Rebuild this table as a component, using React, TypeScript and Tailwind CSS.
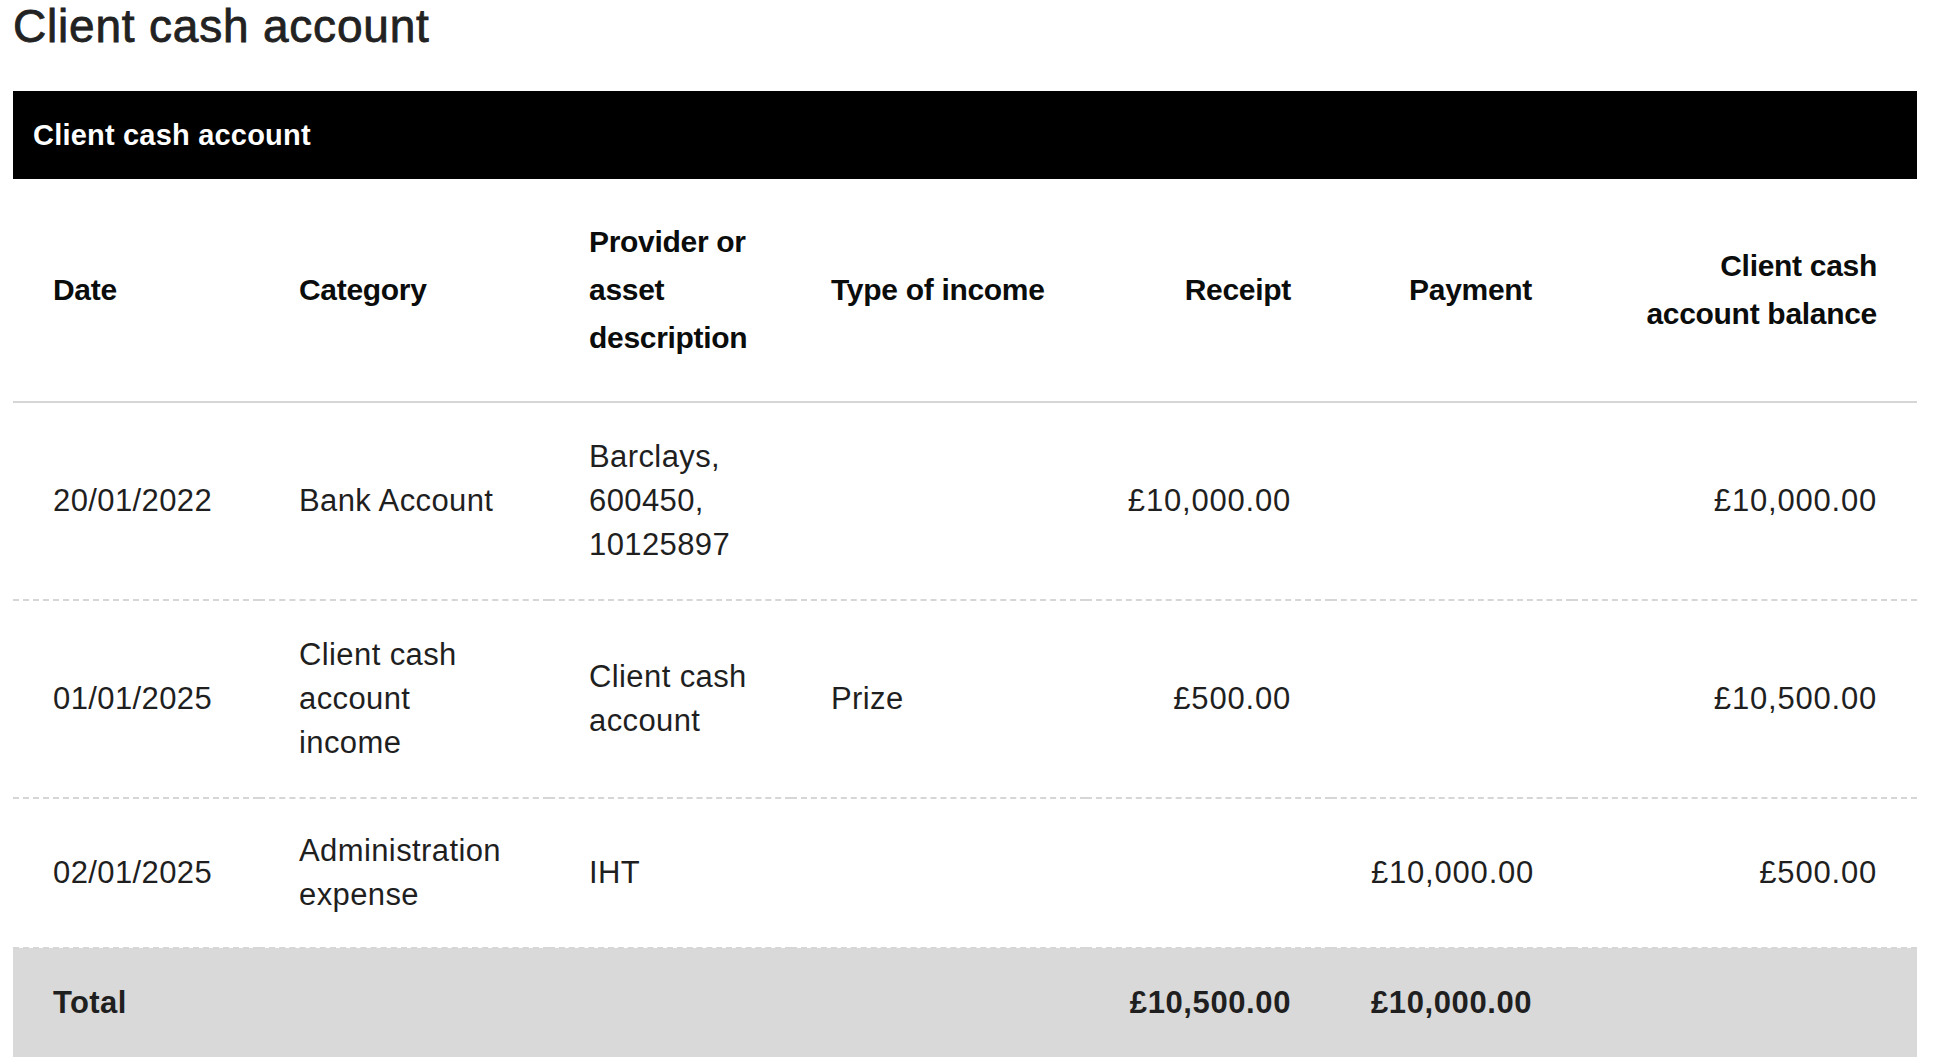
import React from 'react';

type Row = {
  date: string;
  category: string[];
  provider: string[];
  income: string;
  receipt: string;
  payment: string;
  balance: string;
};

const rows: Row[] = [
  {
    date: '20/01/2022',
    category: ['Bank Account'],
    provider: ['Barclays,', '600450,', '10125897'],
    income: '',
    receipt: '£10,000.00',
    payment: '',
    balance: '£10,000.00',
  },
  {
    date: '01/01/2025',
    category: ['Client cash', 'account', 'income'],
    provider: ['Client cash', 'account'],
    income: 'Prize',
    receipt: '£500.00',
    payment: '',
    balance: '£10,500.00',
  },
  {
    date: '02/01/2025',
    category: ['Administration', 'expense'],
    provider: ['IHT'],
    income: '',
    receipt: '',
    payment: '£10,000.00',
    balance: '£500.00',
  },
];

const Lines: React.FC<{ lines: string[] }> = ({ lines }) => (
  <>
    {lines.map((l, i) => (
      <React.Fragment key={i}>
        {i > 0 && <br />}
        {l}
      </React.Fragment>
    ))}
  </>
);

const App: React.FC = () => {
  const th = 'px-[40px] py-[39px] align-middle text-[30px] leading-[48px] font-bold tracking-[-0.3px] text-[#0b0c0c] whitespace-nowrap';
  const td = 'px-[40px] align-middle text-[31px] leading-[44px] tracking-[0.4px] text-[#1f1f1f] whitespace-nowrap';
  const money = 'tracking-[0.8px]';

  return (
    <div className="min-h-screen bg-white pl-[13px] font-['Liberation_Sans',Arial,sans-serif]">
      <h1 className="pt-0 text-[46px] leading-[52px] tracking-[0.8px] font-normal text-[#222222] [-webkit-text-stroke:0.8px_#222222]">
        Client cash account
      </h1>

      <table className="mt-[39px] w-[1904px] table-fixed border-collapse">
        <caption className="bg-black pl-[20px] text-left text-[29px] leading-[88px] font-bold tracking-[0.2px] text-white">
          Client cash account
        </caption>
        <colgroup>
          <col className="w-[246px]" />
          <col className="w-[290px]" />
          <col className="w-[242px]" />
          <col className="w-[295px]" />
          <col className="w-[245px]" />
          <col className="w-[241px]" />
          <col className="w-[345px]" />
        </colgroup>
        <thead>
          <tr className="border-b-2 border-solid border-[#d6d6d6]">
            <th className={`${th} text-left`}>Date</th>
            <th className={`${th} text-left`}>Category</th>
            <th className={`${th} text-left`}>
              Provider or
              <br />
              asset
              <br />
              description
            </th>
            <th className={`${th} text-left`}>Type of income</th>
            <th className={`${th} text-right`}>Receipt</th>
            <th className={`${th} text-right`}>Payment</th>
            <th className={`${th} text-right`}>
              Client cash
              <br />
              account balance
            </th>
          </tr>
        </thead>
        <tbody>
          {rows.map((r, i) => {
            // last row sits a little tighter in the design
            const pad = i === rows.length - 1 ? 'py-[30px]' : 'py-[32px]';
            return (
              <tr key={i} className="border-b-2 border-dashed border-[#d6d6d6]">
                <td className={`${td} ${pad} text-left`}>{r.date}</td>
                <td className={`${td} ${pad} text-left`}>
                  <Lines lines={r.category} />
                </td>
                <td className={`${td} ${pad} text-left`}>
                  <Lines lines={r.provider} />
                </td>
                <td className={`${td} ${pad} text-left`}>{r.income}</td>
                <td className={`${td} ${pad} ${money} text-right`}>{r.receipt}</td>
                <td className={`${td} ${pad} ${money} text-right`}>{r.payment}</td>
                <td className={`${td} ${pad} ${money} text-right`}>{r.balance}</td>
              </tr>
            );
          })}
        </tbody>
        <tfoot>
          <tr className="bg-[#d9d9d9]">
            <td className={`${td} py-[32px] text-left font-bold tracking-[-0.3px] text-[#0b0c0c]`}>Total</td>
            <td className={`${td} py-[32px]`}></td>
            <td className={`${td} py-[32px]`}></td>
            <td className={`${td} py-[32px]`}></td>
            <td className={`${td} py-[32px] text-right font-bold tracking-[0.6px] text-[#0b0c0c]`}>£10,500.00</td>
            <td className={`${td} py-[32px] text-right font-bold tracking-[0.6px] text-[#0b0c0c]`}>£10,000.00</td>
            <td className={`${td} py-[32px]`}></td>
          </tr>
        </tfoot>
      </table>
    </div>
  );
};

export default App;
